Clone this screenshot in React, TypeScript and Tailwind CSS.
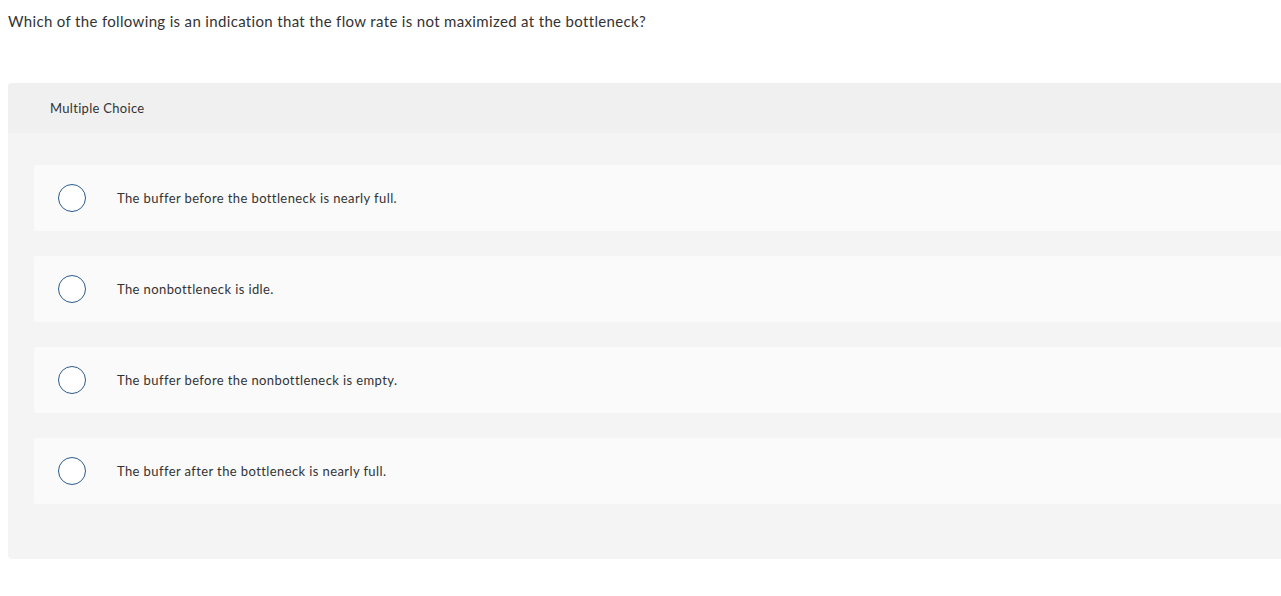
import React from "react";

const options = [
  "The buffer before the bottleneck is nearly full.",
  "The nonbottleneck is idle.",
  "The buffer before the nonbottleneck is empty.",
  "The buffer after the bottleneck is nearly full.",
];

export default function App() {
  return (
    <div className="w-[1281px] h-[596px] overflow-hidden bg-white text-[#333] font-['Lato',sans-serif]">
      <div className="pl-2 pt-[11px] text-[15px] leading-[20px] tracking-[0.34px]">
        Which of the following is an indication that the flow rate is not maximized at the bottleneck?
      </div>
      <div className="ml-2 mt-[52px] rounded-l-[4px] bg-[#f4f4f4]">
        <div className="h-[50px] flex items-center pl-[42px] pt-[2px] bg-[#f0f0f0] rounded-tl-[4px] text-[13px] tracking-[0.3px]">
          Multiple Choice
        </div>
        <div className="pt-[32px] pb-[55px] pl-[26px] flex flex-col gap-[25px]">
          {options.map((o) => (
            <div
              key={o}
              className="h-[66px] flex items-center bg-[#fafafa] rounded-l-[3px] pl-[24px]"
            >
              <div className="w-[28px] h-[28px] rounded-full border-[1.5px] border-[#2b5a88] bg-white shrink-0" />
              <div className="ml-[31px] pt-[2px] text-[13px] tracking-[0.4px]">{o}</div>
            </div>
          ))}
        </div>
      </div>
    </div>
  );
}
